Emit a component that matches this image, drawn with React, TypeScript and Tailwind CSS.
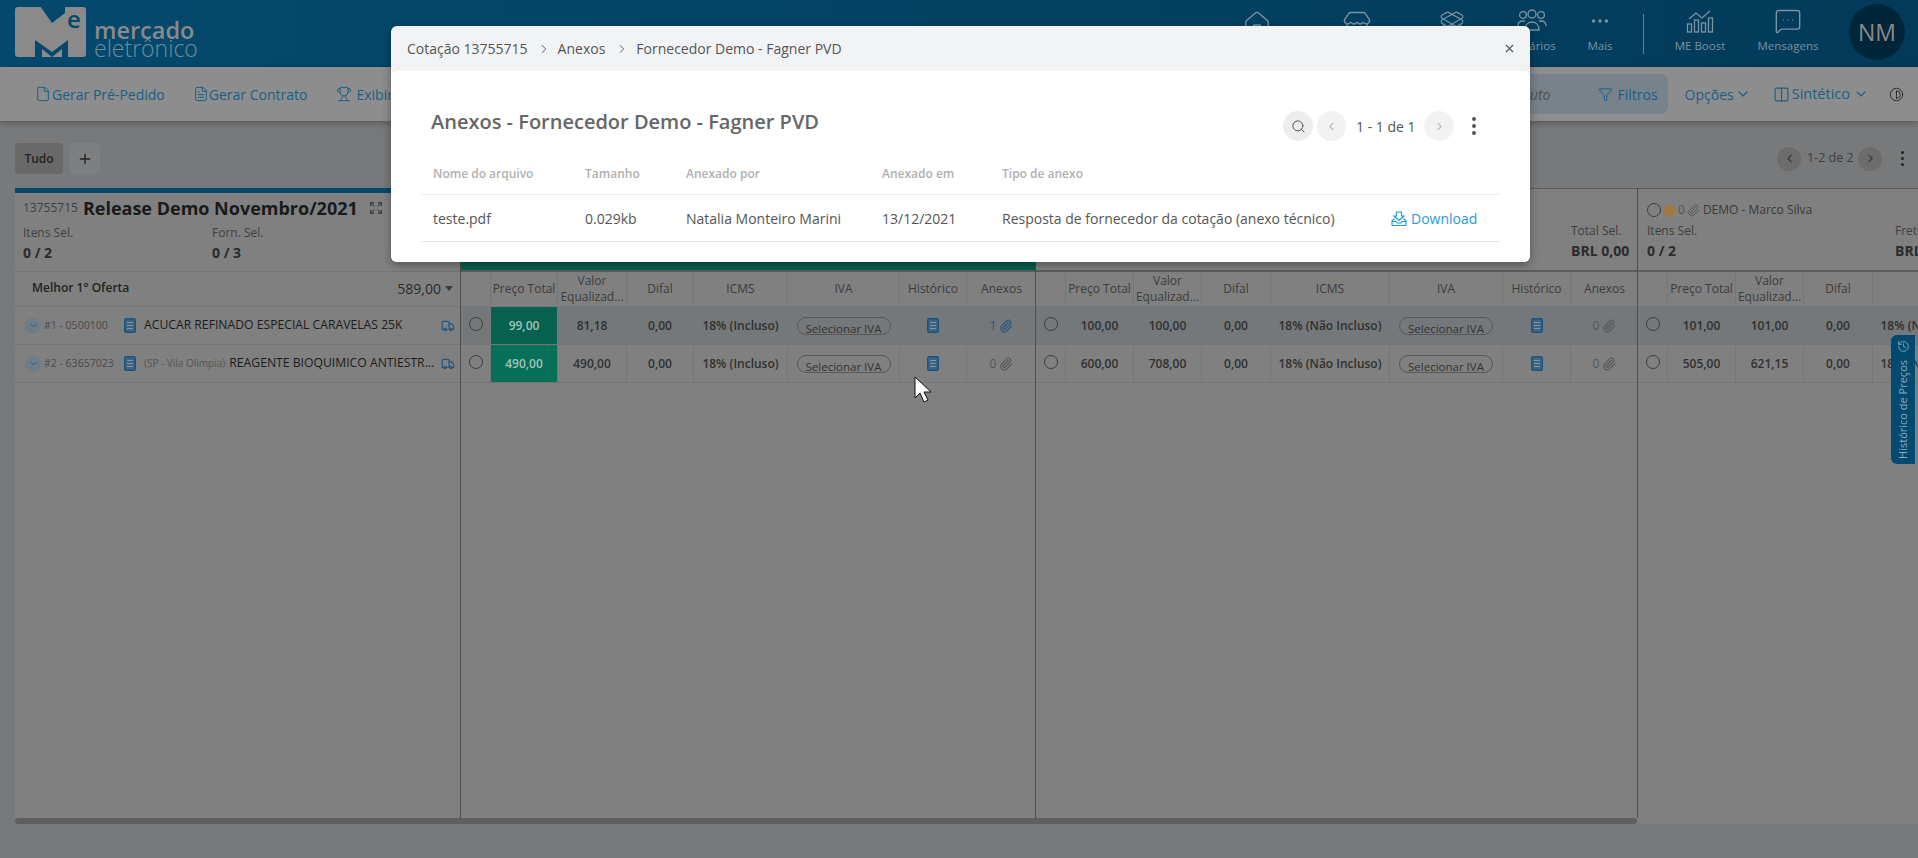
import React from "react";
import {
  ChevronDown,
  ChevronLeft,
  ChevronRight,
  Columns2,
  Contrast,
  Ellipsis,
  Expand,
  File,
  FileText,
  Funnel,
  History,
  House,
  MessageSquareMore,
  PackageOpen,
  Paperclip,
  Plus,
  Search,
  Store,
  Trophy,
  Truck,
  X,
} from "lucide-react";

// widths of the sub columns in each supplier column
const COL_A = ["w-[30px]", "w-[67px]", "w-[69px]", "w-[67px]", "w-[94px]", "w-[112px]", "w-[67px]", "w-[69px]"];
const COL_B = ["w-[30px]", "w-[68px]", "w-[68px]", "w-[69px]", "w-[119px]", "w-[113px]", "w-[68px]", "w-[67px]"];

const HEADS = ["", "Preço Total", "Valor Equalizad...", "Difal", "ICMS", "IVA", "Histórico", "Anexos"];

const DocIcon = ({ className = "" }: { className?: string }) => (
  <svg width="12" height="15" viewBox="0 0 12 15" className={className}>
    <rect x="0.75" y="0.75" width="10.5" height="13.5" rx="1.2" fill="#3f6480" stroke="#1a5580" strokeWidth="1.5" />
    <path d="M3 4.5h6M3 7.5h6M3 10.5h6" stroke="#8096a6" strokeWidth="1" />
  </svg>
);

const Radio = () => <span className="block w-[14px] h-[14px] rounded-full border border-[#3d3d3d]" />;

const Clip = ({ active }: { active?: boolean }) => (
  <Paperclip size={14} strokeWidth={1.9} className={active ? "text-[#1d5682]" : "text-[#555555]"} />
);

const IvaPill = () => (
  <span className="flex justify-center w-[94px] h-[18px] rounded-full border border-[#585858] text-[11.5px] font-normal leading-[21px] text-[#333333] overflow-hidden">
    Selecionar IVA
  </span>
);

const HeadRow = ({ widths }: { widths: string[] }) => (
  <div className="flex h-[35px] border-b border-[#777777] shrink-0">
    {HEADS.map((h, i) => (
      <div
        key={i}
        className={`${widths[i]} shrink-0 flex items-center justify-center text-center text-[12px] leading-[16px] text-[#3c3c3c] ${
          i < 7 ? "border-r border-[#777777]" : ""
        }`}
      >
        {h === "Valor Equalizad..." ? (
          <span>
            Valor
            <br />
            Equalizad...
          </span>
        ) : (
          h
        )}
      </div>
    ))}
  </div>
);

type Offer = {
  price: string;
  valor: string;
  icms: string;
  anexos: number;
  best?: string;
  hover?: boolean;
};

const OfferRow = ({ widths, offer }: { widths: string[]; offer: Offer }) => {
  const cell = "shrink-0 flex items-center justify-center border-r border-[#777777] text-[12px] font-semibold text-[#303030]";
  return (
    <div className={`flex h-[38px] shrink-0 border-b border-[#757575] ${offer.hover ? "bg-[#74787a]" : ""}`}>
      <div className={`${widths[0]} ${cell} pb-[4px]`}>
        <Radio />
      </div>
      {offer.best ? (
        <div className={`${widths[1]} ${cell} ${offer.best} text-[#a3c4b9]`}>{offer.price}</div>
      ) : (
        <div className={`${widths[1]} ${cell}`}>{offer.price}</div>
      )}
      <div className={`${widths[2]} ${cell}`}>{offer.valor}</div>
      <div className={`${widths[3]} ${cell}`}>0,00</div>
      <div className={`${widths[4]} ${cell} whitespace-nowrap`}>{offer.icms}</div>
      <div className={`${widths[5]} ${cell}`}>
        <IvaPill />
      </div>
      <div className={`${widths[6]} ${cell}`}>
        <DocIcon />
      </div>
      <div className={`${widths[7]} shrink-0 flex items-center justify-center gap-[3px] text-[12px]`}>
        <span className={offer.anexos ? "text-[#1d5682]" : "text-[#555555]"}>{offer.anexos}</span>
        <Clip active={offer.anexos > 0} />
      </div>
    </div>
  );
};

const NavItem = ({
  label,
  icon,
  className = "w-[76px]",
}: {
  label: string;
  icon: React.ReactNode;
  className?: string;
}) => (
  <div className={`flex flex-col items-center ${className}`}>
    <div className="h-[24px] flex items-center justify-center text-[#7a93a3]">{icon}</div>
    <span className="mt-[5px] text-[11.5px] leading-[16px] text-[#7a93a3]">{label}</span>
  </div>
);

const Logo = () => (
  <div className="flex items-start">
    <svg width="71" height="50" viewBox="0 0 71 50">
      <rect width="71" height="50" rx="3" fill="#8a8a8a" />
      <polygon points="25,-1 37,16 50,6 50,-1" fill="#04496b" />
      <polygon points="20,50 20,33 37,45 53,33 53,50 47,50 47,42 37,50 27,42 27,50" fill="#04496b" />
      <text x="52" y="21" fontSize="24" fontWeight="600" fontFamily="'Open Sans', sans-serif" fill="#04496b">
        e
      </text>
    </svg>
    <div className="ml-[8px] mt-[14px] flex flex-col">
      <span className="text-[23.5px] leading-[18px] font-semibold text-[#8a8a8a]">mercado</span>
      <span className="text-[23px] leading-[18px] font-light text-[#6f8b9c]">eletrônico</span>
    </div>
  </div>
);

const UsersIcon = () => (
  <svg width="30" height="24" viewBox="0 0 30 24" fill="none" stroke="#7a93a3" strokeWidth="1.3">
    <circle cx="6" cy="6" r="3.4" />
    <circle cx="15" cy="5" r="4" />
    <circle cx="24" cy="6" r="3.4" />
    <path d="M1 17c0-3 2-5 5-5h2M29 17c0-3-2-5-5-5h-2M8 21c0-5 3-8 7-8s7 3 7 8z" />
  </svg>
);

const BoostIcon = () => (
  <svg width="28" height="24" viewBox="0 0 28 24" fill="none" stroke="#7a93a3" strokeWidth="1.3">
    <path d="M3 10l7-6 6 5 8-7" />
    <rect x="1.5" y="15" width="4" height="8" />
    <rect x="8.5" y="11" width="4" height="12" />
    <rect x="15.5" y="14" width="4" height="9" />
    <rect x="22.5" y="9" width="4" height="14" />
  </svg>
);

const DownloadTray = () => (
  <svg width="16" height="15" viewBox="0 0 16 15" fill="none" stroke="#1f9bdc" strokeWidth="1.2">
    <path d="M5.5 1h5v4H13L8 9.5 3 5h2.5z" />
    <path d="M3.5 7.5L1 10v3.5a1 1 0 0 0 1 1h12a1 1 0 0 0 1-1V10l-2.5-2.5M1 10.5h4l1 1.5h4l1-1.5h4" />
  </svg>
);

const ModalColumn = ({ className, children }: { className: string; children: React.ReactNode }) => (
  <div className={`${className} shrink-0`}>{children}</div>
);

export default function App() {
  return (
    <div className="relative w-[1918px] h-[858px] overflow-hidden bg-[#77797b] font-['Open_Sans',sans-serif]">
      {/* top bar */}
      <header className="h-[67px] flex bg-gradient-to-r from-[#044a6e] to-[#033a59] pl-[15px] pt-[7px]">
        <Logo />
        <div className="flex-1 flex justify-end items-start pt-[2px] pr-[13px]">
          <NavItem className="w-[76px]" label="Início" icon={<House size={30} strokeWidth={1.1} className="mt-[8px]" />} />
          <NavItem className="w-[76px] ml-[24px]" label="Compras" icon={<Store size={30} strokeWidth={1.1} className="mt-[8px]" />} />
          <NavItem className="w-[76px] ml-[19px]" label="Produtos" icon={<PackageOpen size={26} strokeWidth={1.1} className="mt-[4px]" />} />
          <NavItem className="w-[76px] ml-[4px]" label="Usuários" icon={<UsersIcon />} />
          <NavItem className="w-[60px]" label="Mais" icon={<Ellipsis size={22} strokeWidth={1.8} />} />
          <div className="ml-[13px] mr-[18px] mt-[5px] w-px h-[40px] bg-[#5f7f92]" />
          <NavItem label="ME Boost" icon={<BoostIcon />} />
          <NavItem className="w-[76px] ml-[12px]" label="Mensagens" icon={<MessageSquareMore size={28} strokeWidth={1.2} />} />
          <div className="ml-[23px] -mt-[5px] w-[56px] h-[56px] rounded-full bg-[#01263a] flex items-center justify-center text-[23px] text-[#8a8a8a]">
            NM
          </div>
        </div>
      </header>

      {/* actions */}
      <nav className="relative h-[54px] flex items-center bg-[#8d8d8d] shadow-[0_2px_6px_rgba(0,0,0,0.3)] pl-[35px] pr-[14px] text-[14px] text-[#1a5f87]">
        <span className="flex items-center gap-[1px]">
          <File size={16} strokeWidth={1.5} />
          Gerar Pré-Pedido
        </span>
        <span className="flex items-center ml-[28px]">
          <FileText size={16} strokeWidth={1.5} />
          Gerar Contrato
        </span>
        <span className="flex items-center gap-[4px] ml-[29px]">
          <Trophy size={16} strokeWidth={1.5} />
          Exibir
        </span>
        <div className="ml-auto flex items-center">
          <div className="w-[300px] h-[40px] rounded-lg bg-[#78828a] flex items-center justify-end pr-[10px]">
            <span className="mr-[48px] italic text-[#4f4f4f]">Produto</span>
            <Funnel size={15} strokeWidth={1.6} />
            <span className="ml-[4px]">Filtros</span>
          </div>
          <span className="ml-[17px]">Opções</span>
          <ChevronDown size={16} strokeWidth={1.6} className="ml-[1px]" />
          <Columns2 size={17} strokeWidth={1.6} className="ml-[22px]" />
          <span className="ml-[2px] text-[14.5px]">Sintético</span>
          <ChevronDown size={16} strokeWidth={1.6} className="ml-[3px]" />
          <Contrast size={15} strokeWidth={1.6} className="ml-[20px] text-[#2f2f2f]" />
        </div>
      </nav>

      {/* tabs */}
      <div className="flex items-center h-[67px] pl-[15px] pr-[7px] pt-[8px]">
        <span className="w-[48px] h-[31px] rounded bg-[#696969] flex items-center justify-center text-[12px] font-semibold text-[#222222]">
          Tudo
        </span>
        <span className="ml-[7px] w-[30px] h-[31px] rounded bg-[#7d7f80] flex items-center justify-center text-[#222222]">
          <Plus size={16} strokeWidth={2} />
        </span>
        <div className="ml-auto flex items-center text-[#3f3f3f]">
          <span className="w-[24px] h-[24px] rounded-full bg-[#6c6c6c] flex items-center justify-center">
            <ChevronLeft size={13} strokeWidth={2.5} />
          </span>
          <span className="mx-[6px] w-[45px] text-[12.5px] whitespace-nowrap">1-2 de 2</span>
          <span className="w-[24px] h-[24px] rounded-full bg-[#6c6c6c] flex items-center justify-center">
            <ChevronRight size={13} strokeWidth={2.5} />
          </span>
          <span className="ml-[11px] w-[18px] flex flex-col items-center gap-[3px]">
            <i className="w-[3px] h-[3px] rounded-full bg-[#262626]" />
            <i className="w-[3px] h-[3px] rounded-full bg-[#262626]" />
            <i className="w-[3px] h-[3px] rounded-full bg-[#262626]" />
          </span>
        </div>
      </div>

      {/* board */}
      <section className="ml-[15px] h-[636px] bg-[#808080] flex flex-col">
        <div className="flex-1 min-h-0 flex">
          {/* item column */}
          <div className="w-[446px] shrink-0 flex flex-col border-r border-[#4d4d4d]">
            <div className="h-[5px] bg-[#04496b]" />
            <div className="h-[79px] border-b border-[#757575] pl-[8px]">
              <div className="flex items-center h-[30px]">
                <span className="text-[12px] text-[#3f3f3f]">13755715</span>
                <span className="ml-[5px] text-[18px] font-bold text-[#1a1a1a] whitespace-nowrap">Release Demo Novembro/2021</span>
                <Expand size={14} strokeWidth={1.8} className="ml-[11px] text-[#2f2f2f]" />
              </div>
              <div className="flex mt-[1px]">
                <div className="w-[189px]">
                  <div className="text-[12px] leading-[18px] text-[#3f3f3f]">Itens Sel.</div>
                  <div className="text-[14px] leading-[22px] font-bold text-[#2b2b2b]">0 / 2</div>
                </div>
                <div>
                  <div className="text-[12px] leading-[18px] text-[#3f3f3f]">Forn. Sel.</div>
                  <div className="text-[14px] leading-[22px] font-bold text-[#2b2b2b]">0 / 3</div>
                </div>
              </div>
            </div>
            <div className="h-[35px] flex items-center border-b border-[#757575] pl-[17px] pr-[7px] pb-[2px]">
              <span className="text-[12px] font-semibold text-[#222222]">Melhor 1° Oferta</span>
              <span className="ml-auto text-[14px] text-[#2b2b2b]">589,00</span>
              <span className="ml-[4px] w-0 h-0 border-x-[4px] border-x-transparent border-t-[5px] border-t-[#3a3a3a]" />
            </div>
            {[
              { code: "#1 - 0500100", place: "", name: "ACUCAR REFINADO ESPECIAL CARAVELAS 25K" },
              { code: "#2 - 63657023", place: "(SP - Vila Olimpia)", name: "REAGENTE BIOQUIMICO ANTIESTR..." },
            ].map((it) => (
              <div key={it.code} className="h-[38px] flex items-center border-b border-[#757575] pl-[10px] pr-[5px]">
                <span className="w-[16px] h-[16px] rounded-full bg-[#6f7c86] flex items-center justify-center text-[#1f5f8a]">
                  <ChevronDown size={11} strokeWidth={2} />
                </span>
                <span className="ml-[3px] w-[80px] text-[10.5px] text-[#4a4a4a] whitespace-nowrap">{it.code}</span>
                <DocIcon />
                <span className="ml-[8px] text-[10px] text-[#555555] whitespace-nowrap">{it.place}</span>
                <span className={`${it.place ? "ml-[4px]" : ""} text-[12.2px] font-medium text-[#1c1c1c] whitespace-nowrap`}>{it.name}</span>
                <Truck size={14} strokeWidth={2} className="ml-auto text-[#1d5682]" />
              </div>
            ))}
          </div>

          {/* supplier winner */}
          <div className="w-[575px] shrink-0 flex flex-col border-r border-[#4d4d4d]">
            <div className="h-[82px] bg-[#06604f]" />
            <div className="h-[2px] bg-[#5c5c5c]" />
            <HeadRow widths={COL_A} />
            <OfferRow widths={COL_A} offer={{ price: "99,00", valor: "81,18", icms: "18% (Incluso)", anexos: 1, best: "bg-[#06624f]", hover: true }} />
            <OfferRow widths={COL_A} offer={{ price: "490,00", valor: "490,00", icms: "18% (Incluso)", anexos: 0, best: "bg-[#067058]" }} />
          </div>

          {/* second supplier */}
          <div className="w-[602px] shrink-0 flex flex-col border-r border-[#4d4d4d]">
            <div className="h-[82px] border-t border-[#5c5c5c] flex justify-end pr-[8px] pt-[33px]">
              <div className="w-[58px]">
                <div className="text-[12px] leading-[18px] text-[#3f3f3f] whitespace-nowrap">Total Sel.</div>
                <div className="text-[14px] leading-[22px] font-bold text-[#2b2b2b] whitespace-nowrap">BRL 0,00</div>
              </div>
            </div>
            <div className="h-[2px] bg-[#5c5c5c]" />
            <HeadRow widths={COL_B} />
            <OfferRow widths={COL_B} offer={{ price: "100,00", valor: "100,00", icms: "18% (Não Incluso)", anexos: 0, hover: true }} />
            <OfferRow widths={COL_B} offer={{ price: "600,00", valor: "708,00", icms: "18% (Não Incluso)", anexos: 0 }} />
          </div>

          {/* third supplier, cut by the window */}
          <div className="flex-1 min-w-0 flex flex-col overflow-hidden">
            <div className="h-[82px] border-t border-[#5c5c5c] pl-[9px] pt-[11px]">
              <div className="flex items-center h-[20px] text-[12px] text-[#3a3a3a] whitespace-nowrap">
                <Radio />
                <span className="ml-[3px] w-[11px] h-[11px] rounded-full bg-[#a87632] flex items-center justify-center text-[8px] font-bold text-[#808080]">
                  i
                </span>
                <span className="ml-[3px] text-[#555555]">0</span>
                <Paperclip size={13} strokeWidth={1.8} className="ml-[2px] text-[#555555]" />
                <span className="ml-[3px]">DEMO - Marco Silva</span>
              </div>
              <div className="flex mt-[2px]">
                <div className="w-[248px] shrink-0">
                  <div className="text-[12px] leading-[18px] text-[#3f3f3f]">Itens Sel.</div>
                  <div className="text-[14px] leading-[22px] font-bold text-[#2b2b2b]">0 / 2</div>
                </div>
                <div className="shrink-0">
                  <div className="text-[12px] leading-[18px] text-[#3f3f3f]">Frete</div>
                  <div className="text-[14px] leading-[22px] font-bold text-[#2b2b2b] whitespace-nowrap">BRL 0,00</div>
                </div>
              </div>
            </div>
            <div className="h-[2px] w-[280px] bg-[#5c5c5c]" />
            <div className="w-[640px]">
              <HeadRow widths={COL_B} />
              <OfferRow widths={COL_B} offer={{ price: "101,00", valor: "101,00", icms: "18% (Não Incluso)", anexos: 0, hover: true }} />
              <OfferRow widths={COL_B} offer={{ price: "505,00", valor: "621,15", icms: "18% (Não Incluso)", anexos: 0 }} />
            </div>
          </div>
        </div>
        <div className="w-[1622px] h-[6px] shrink-0 rounded-sm bg-[#5f5f5f]" />
      </section>

      {/* side tab */}
      <div className="absolute right-[3px] top-[335px] w-[24px] h-[129px] rounded-l-md rounded-r-none bg-[#034a70] flex flex-col items-center pt-[5px] text-[#8fa9b8]">
        <History size={13} strokeWidth={1.6} />
        <span className="mt-[7px] text-[11px] whitespace-nowrap [writing-mode:vertical-rl] rotate-180">Histórico de Preços</span>
      </div>

      {/* attachments window */}
      <div className="absolute left-[391px] top-[26px] w-[1139px] h-[236px] rounded-md bg-[#f1f3f5] shadow-[0_3px_10px_rgba(0,0,0,0.35)] flex flex-col">
        <div className="h-[45px] shrink-0 flex items-center pl-[16px] pr-[14px] text-[14px] text-[#555555]">
          <span>Cotação 13755715</span>
          <ChevronRight size={14} strokeWidth={1.6} className="ml-[9px] mr-[7px]" />
          <span>Anexos</span>
          <ChevronRight size={14} strokeWidth={1.6} className="ml-[10px] mr-[7px]" />
          <span>Fornecedor Demo - Fagner PVD</span>
          <X size={13} strokeWidth={2} className="ml-auto" />
        </div>
        <div className="flex-1 rounded-md bg-white px-[30px]">
          <div className="flex items-center h-[86px] pl-[10px] pr-[24px]">
            <h2 className="text-[20px] font-semibold text-[#666666] whitespace-nowrap mt-[16px]">Anexos - Fornecedor Demo - Fagner PVD</h2>
            <div className="ml-auto flex items-center text-[14px] text-[#555555] mt-[24px]">
              <span className="w-[30px] h-[30px] rounded-full bg-[#ededed] flex items-center justify-center">
                <Search size={15} strokeWidth={1.6} />
              </span>
              <span className="ml-[4px] w-[29px] h-[30px] rounded-full bg-[#f2f2f2] flex items-center justify-center text-[#bbbbbb]">
                <ChevronLeft size={13} strokeWidth={2} />
              </span>
              <span className="mx-[10px] w-[58px] whitespace-nowrap">1 - 1 de 1</span>
              <span className="w-[30px] h-[30px] rounded-full bg-[#f2f2f2] flex items-center justify-center text-[#bbbbbb]">
                <ChevronRight size={13} strokeWidth={2} />
              </span>
              <span className="ml-[18px] flex flex-col gap-[3px]">
                <i className="w-[4px] h-[4px] rounded-full bg-[#555555]" />
                <i className="w-[4px] h-[4px] rounded-full bg-[#555555]" />
                <i className="w-[4px] h-[4px] rounded-full bg-[#555555]" />
              </span>
            </div>
          </div>
          <div className="flex items-center h-[38px] pb-[4px] pl-[12px] border-b border-[#e9ecef] text-[12px] font-semibold text-[#b0b0b0]">
            <ModalColumn className="w-[152px]">Nome do arquivo</ModalColumn>
            <ModalColumn className="w-[101px]">Tamanho</ModalColumn>
            <ModalColumn className="w-[196px]">Anexado por</ModalColumn>
            <ModalColumn className="w-[120px]">Anexado em</ModalColumn>
            <ModalColumn className="w-[300px]">Tipo de anexo</ModalColumn>
          </div>
          <div className="flex items-center h-[47px] pl-[12px] border-b border-[#e3e5e8] text-[14px] text-[#555555]">
            <ModalColumn className="w-[152px]">teste.pdf</ModalColumn>
            <ModalColumn className="w-[101px]">0.029kb</ModalColumn>
            <ModalColumn className="w-[196px]">Natalia Monteiro Marini</ModalColumn>
            <ModalColumn className="w-[120px]">13/12/2021</ModalColumn>
            <ModalColumn className="w-[389px] whitespace-nowrap">Resposta de fornecedor da cotação (anexo técnico)</ModalColumn>
            <span className="flex items-center gap-[4px] text-[#1f9bdc]">
              <DownloadTray />
              Download
            </span>
          </div>
        </div>
      </div>

      {/* mouse pointer */}
      <svg className="absolute left-[914px] top-[376px]" width="22" height="28" viewBox="0 0 22 28">
        <path d="M1 1v21l5-5 4 9 4-2-4-8h7z" fill="#ffffff" stroke="#111111" strokeWidth="1" />
      </svg>
    </div>
  );
}
